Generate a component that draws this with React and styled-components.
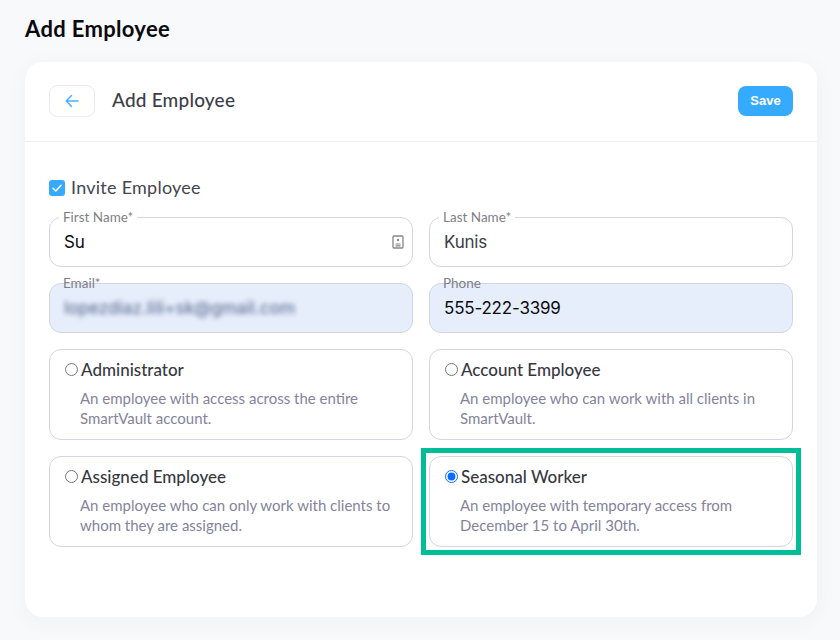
import React from "react";
import styled, { createGlobalStyle } from "styled-components";

const Global = createGlobalStyle`
  html, body { margin: 0; padding: 0; height: 640px; overflow: hidden; background: #f8f9fb; }
  * { box-sizing: border-box; }
  body { font-family: Lato, "Noto Sans", sans-serif; }
`;
const Page = styled.div`
  width: 840px; height: 640px; padding: 15px 23px 23px 25px;
  display: flex; flex-direction: column;
`;
const PageTitle = styled.h1`
  margin: 0 0 19px; height: 28px; line-height: 28px;
  font-size: 22px; font-weight: 700; color: #0a0a0f; letter-spacing: 0.33px;
`;
const Card = styled.main`
  flex: 1; background: #fff; border-radius: 18px;
  box-shadow: 0 4px 24px rgba(40, 50, 80, 0.04);
`;
const Header = styled.header`
  height: 80px; padding: 0 24px 2px; border-bottom: 1px solid #eceef2;
  display: flex; align-items: center;
`;
const BackButton = styled.button`
  width: 46px; height: 32px; border: 1px solid #e8ebf2; border-radius: 8px;
  background: #fff; padding: 0; margin-right: 17px;
  display: flex; align-items: center; justify-content: center;
`;
const HeaderTitle = styled.h2`
  margin: 0 0 2px; flex: 1; font-size: 19px; font-weight: 500; color: #3e3e48; letter-spacing: 0.2px;
`;
const SaveButton = styled.button`
  width: 55px; height: 30px; border: 0; border-radius: 8px; background: #36aaff;
  color: #fff; font-family: "Liberation Sans", Arial, sans-serif; font-size: 13px; font-weight: 700;
  padding: 0;
`;
const Body = styled.div`
  padding: 38px 24px 0;
  display: flex; flex-direction: column;
`;
const InviteRow = styled.label`
  display: flex; align-items: center; gap: 6px; height: 16px; margin-bottom: 15px;
  font-size: 18px; color: #45454f; letter-spacing: 0.25px;
`;
const InviteText = styled.span`
  margin-bottom: 3px;
`;
const CheckBox = styled.span`
  width: 16px; height: 16px; border-radius: 3px; background: #36aaff;
  display: flex; align-items: center; justify-content: center;
`;
const Grid = styled.div`
  display: grid; grid-template-columns: 364px 364px; column-gap: 16px;
`;
const Field = styled.fieldset`
  position: relative; margin: 0 0 ${p => (p.$filled ? "16px" : "10px")}; padding: 0; height: 56px; min-width: 0;
  border: 0;
  &::before {
    content: ""; position: absolute; inset: 6px 0 0; border: 1px solid #d3d6e2; border-radius: 12px;
    background: ${p => (p.$filled ? "#e7eefb" : "#fff")};
  }
`;
const Legend = styled.span`
  position: absolute; left: 10px; top: 0; z-index: 1; padding: 0 4px; height: 14px; line-height: 13px;
  font-size: 13.5px; color: #7f7f88; background: #fff;
  ${p => p.$filled && "background: linear-gradient(to bottom, #fff 6px, transparent 6px);"}
`;
const Value = styled.input`
  position: absolute; left: 15px; top: 6px; width: 320px; height: 50px; z-index: 1; padding: 0;
  border: 0; outline: 0; background: transparent;
  font-family: Inter, sans-serif; font-size: 17px; letter-spacing: -0.2px;
  color: ${p => p.$dark ? "#0b0b10" : "#3d3d47"};
  ${p => p.$blur && "filter: blur(2.4px); color: #5f7396; font-weight: 500; letter-spacing: 0;"}
`;
const FieldIcon = styled.svg`
  position: absolute; right: 9px; top: 24px; z-index: 1;
`;
const Role = styled.label`
  position: relative; height: 91px; margin-bottom: 16px; padding: 10px 20px 0 15px;
  border: 1px solid #d3d6e2; border-radius: 12px; background: #fff; display: block;
  ${p => p.$highlight && `
    &::after {
      content: ""; position: absolute; left: -9px; right: -9px; top: -9px; bottom: -9px;
      border: 5px solid #00bd97; pointer-events: none;
    }
  `}
`;
const RoleHead = styled.div`
  display: flex; align-items: center; gap: 3px; height: 18px;
  font-size: 17px; font-weight: 500; color: #38383f;
`;
const Radio = styled.input`
  width: 13px; height: 13px; margin: 0; accent-color: #0a6cff; flex: none;
`;
const RoleText = styled.p`
  margin: 10px 0 0 15px; font-size: 15px; line-height: 20px; color: #84849a;
`;

const roles = [
  ["Administrator", "An employee with access across the entire", "SmartVault account."],
  ["Account Employee", "An employee who can work with all clients in", "SmartVault."],
  ["Assigned Employee", "An employee who can only work with clients to", "whom they are assigned."],
  ["Seasonal Worker", "An employee with temporary access from", "December 15 to April 30th."],
];

export default function App() {
  return (
    <Page>
      <Global />
      <PageTitle>Add Employee</PageTitle>
      <Card>
        <Header>
          <BackButton aria-label="Back">
            <svg width="16" height="16" viewBox="0 0 16 16" fill="none" stroke="#4bb0ff" strokeWidth="1.5" strokeLinecap="round" strokeLinejoin="round">
              <path d="M14 8H2.5M7.5 2.5 2.2 8l5.3 5.5" />
            </svg>
          </BackButton>
          <HeaderTitle>Add Employee</HeaderTitle>
          <SaveButton>Save</SaveButton>
        </Header>
        <Body>
          <InviteRow>
            <CheckBox>
              <svg width="12" height="12" viewBox="0 0 12 12" fill="none" stroke="#fff" strokeWidth="1.5" strokeLinecap="round" strokeLinejoin="round">
                <path d="M2 6.3 4.8 9 10 3.2" />
              </svg>
            </CheckBox>
            <InviteText>Invite Employee</InviteText>
          </InviteRow>
          <Grid>
            <Field>
              <Legend>First Name*</Legend>
              <Value readOnly value="Su" $dark />
              <FieldIcon width="12" height="14" viewBox="0 0 12 14" fill="none">
                <rect x="1" y="1" width="10" height="12" rx="1" stroke="#85858c" strokeWidth="1.3" />
                <circle cx="6" cy="5" r="1.2" fill="#85858c" />
                <path d="M3.5 9h5M3.5 10.8h5" stroke="#85858c" strokeWidth="1.2" />
              </FieldIcon>
            </Field>
            <Field>
              <Legend>Last Name*</Legend>
              <Value readOnly value="Kunis" />
            </Field>
            <Field $filled>
              <Legend $filled>Email*</Legend>
              <Value readOnly value="lopezdiaz.lili+sk@gmail.com" $blur />
            </Field>
            <Field $filled>
              <Legend $filled>Phone</Legend>
              <Value readOnly value="555-222-3399" $dark />
            </Field>
            {roles.map(([name, a, b], i) => (
              <Role key={name} $highlight={i === 3}>
                <RoleHead>
                  <Radio type="radio" name="role" defaultChecked={i === 3} />
                  {name}
                </RoleHead>
                <RoleText>{a}<br />{b}</RoleText>
              </Role>
            ))}
          </Grid>
        </Body>
      </Card>
    </Page>
  );
}
